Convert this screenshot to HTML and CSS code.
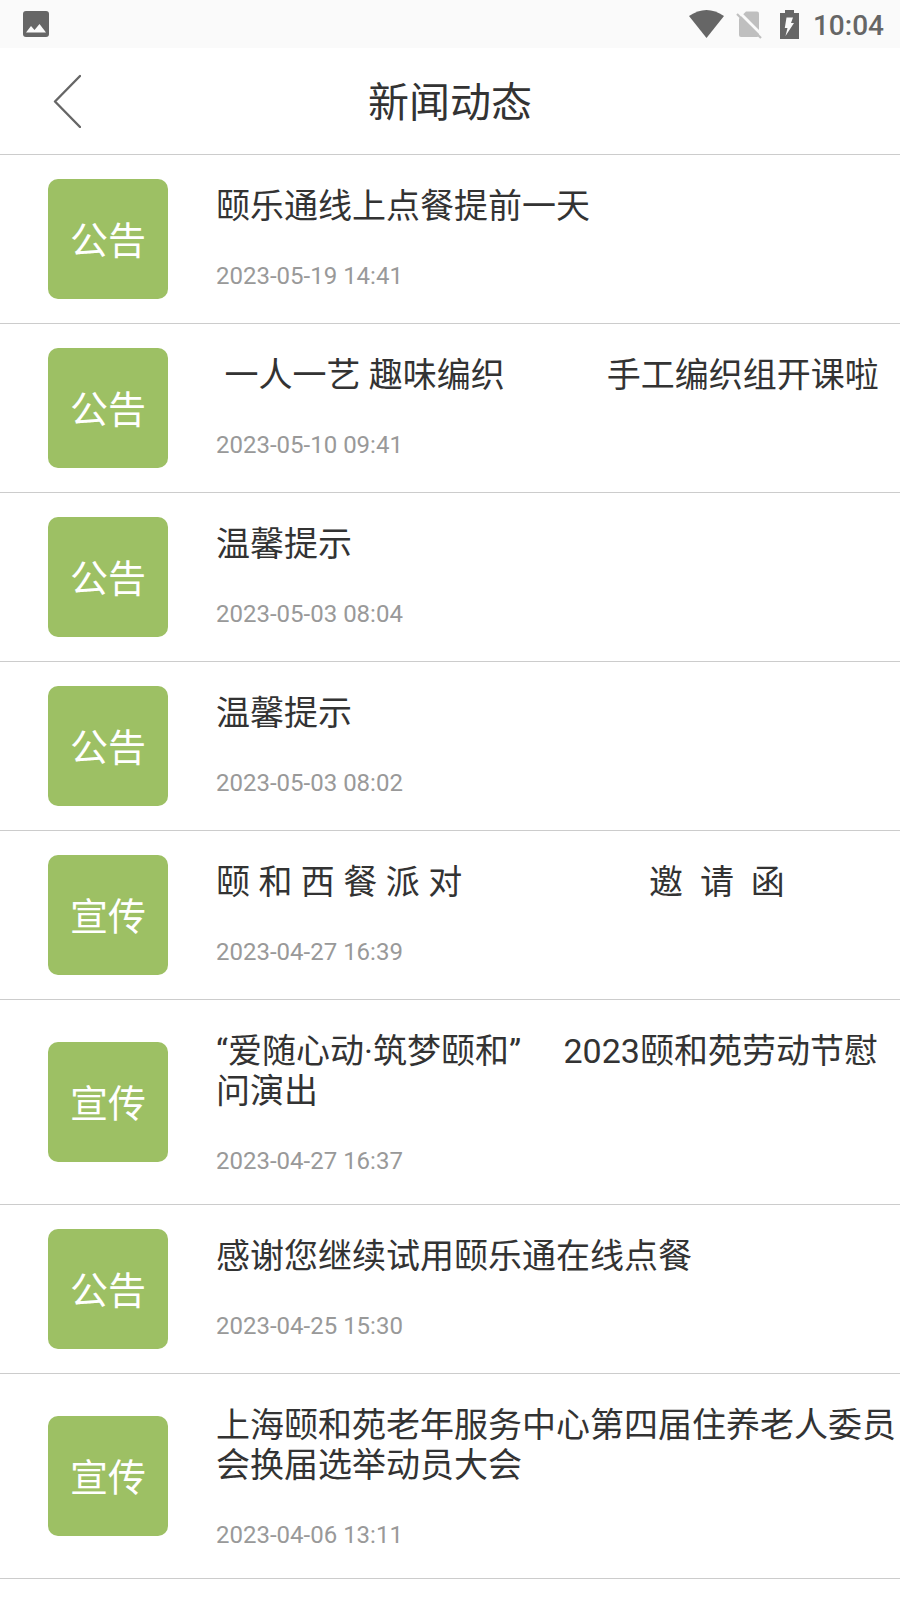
FILE: index.html
```
<!DOCTYPE html>
<html lang="zh-CN">
<head>
    <meta charset="UTF-8">
    <meta name="viewport" content="width=device-width, initial-scale=1.0">
    <title>新闻动态</title>
    <link rel="stylesheet" href="styles.css">
</head>
<body>
    <div class="status-bar">
        <svg class="status-picture" width="26" height="26" viewBox="0 0 26 26" aria-hidden="true">
            <rect width="26" height="26" rx="3" fill="#666"/>
            <path d="M3 21.500L8 15l3.500 4L16.500 13l6.500 8.500z" fill="#fafafa"/>
        </svg>
        <div class="status-right">
            <svg width="35" height="28" viewBox="0 0 35 28" aria-hidden="true">
                <path d="M0 6Q17.500-6 35 6L17.500 28z" fill="#666"/>
            </svg>
            <svg class="status-sim" width="26" height="29" viewBox="0 0 26 29" aria-hidden="true">
                <path d="M10 1.500H21q2 0 2 2V25q0 2-2 2H5q-2 0-2-2V8.500z" fill="#bfbfbf"/>
                <path d="M3.500 2.500l24 24" stroke="#fafafa" stroke-width="3"/>
                <path d="M1 4l24 24" stroke="#bfbfbf" stroke-width="2.200"/>
            </svg>
            <svg class="status-battery" width="19" height="29" viewBox="0 0 19 29" aria-hidden="true">
                <path d="M5 0h9v3h5v26H0V3h5z" fill="#666"/>
                <path d="M6.500 7.500H13L11 13h3L5.500 26l2-8H4.800z" fill="#fafafa"/>
            </svg>
            <span class="status-time">10:04</span>
        </div>
    </div>

    <header class="header">
        <button type="button" class="back" aria-label="返回">
            <svg width="28" height="54" viewBox="0 0 28 54" aria-hidden="true">
                <path d="M27 2L2 27.500L27 53" fill="none" stroke="#666" stroke-width="2.400" stroke-linecap="round" stroke-linejoin="round"/>
            </svg>
        </button>
        <h1>新闻动态</h1>
    </header>

    <main class="news-list">
        <article class="news-item">
            <span class="tag">公告</span>
            <div class="news-text">
                <h2>颐乐通线上点餐提前一天</h2>
                <time>2023-05-19 14:41</time>
            </div>
        </article>
        <article class="news-item">
            <span class="tag">公告</span>
            <div class="news-text">
                <h2> 一人一艺 趣味编织　　　手工编织组开课啦</h2>
                <time>2023-05-10 09:41</time>
            </div>
        </article>
        <article class="news-item">
            <span class="tag">公告</span>
            <div class="news-text">
                <h2>温馨提示</h2>
                <time>2023-05-03 08:04</time>
            </div>
        </article>
        <article class="news-item">
            <span class="tag">公告</span>
            <div class="news-text">
                <h2>温馨提示</h2>
                <time>2023-05-03 08:02</time>
            </div>
        </article>
        <article class="news-item">
            <span class="tag">宣传</span>
            <div class="news-text">
                <h2>颐 和 西 餐 派 对　　　　　  邀  请  函</h2>
                <time>2023-04-27 16:39</time>
            </div>
        </article>
        <article class="news-item">
            <span class="tag">宣传</span>
            <div class="news-text">
                <h2>“爱随心动·筑梦颐和”　 2023颐和苑劳动节慰问演出</h2>
                <time>2023-04-27 16:37</time>
            </div>
        </article>
        <article class="news-item">
            <span class="tag">公告</span>
            <div class="news-text">
                <h2>感谢您继续试用颐乐通在线点餐</h2>
                <time>2023-04-25 15:30</time>
            </div>
        </article>
        <article class="news-item">
            <span class="tag">宣传</span>
            <div class="news-text">
                <h2>上海颐和苑老年服务中心第四届住养老人委员会换届选举动员大会</h2>
                <time>2023-04-06 13:11</time>
            </div>
        </article>
    </main>
</body>
</html>
```
FILE: styles.css
```
* {
    box-sizing: border-box;
}
body {
    margin: 0;
    font-family: Roboto, "Noto Sans CJK SC", sans-serif;
    color: #333333;
    background: #ffffff;
}
svg {
    display: block;
}
.status-bar {
    display: flex;
    align-items: center;
    justify-content: space-between;
    height: 48px;
    padding: 0 16px 0 23px;
    background: #fafafa;
}
.status-right {
    display: flex;
    align-items: center;
}
.status-sim {
    margin-left: 12px;
}
.status-battery {
    margin-left: 18px;
}
.status-time {
    margin-left: 14px;
    padding-top: 4px;
    font-size: 28px;
    font-weight: 500;
    line-height: 44px;
    color: #666666;
}
.header {
    display: grid;
    grid-template-columns: 120px 1fr 120px;
    align-items: center;
    height: 107px;
    border-bottom: 1px solid #cccccc;
}
.back {
    justify-self: start;
    margin-left: 48px;
    padding: 5px;
    border: none;
    background: none;
    cursor: pointer;
}
.header h1 {
    margin: 0;
    padding-top: 4px;
    font-size: 41px;
    font-weight: 400;
    line-height: 60px;
    text-align: center;
}
.news-item {
    display: flex;
    align-items: center;
    min-height: 169px;
    padding-left: 48px;
    border-bottom: 1px solid #cccccc;
}
.tag {
    display: flex;
    flex: none;
    align-items: center;
    justify-content: center;
    width: 120px;
    height: 120px;
    margin-right: 48px;
    padding-bottom: 4px;
    border-radius: 10px;
    font-size: 38px;
    color: #ffffff;
    background: #9dc064;
}
.news-text {
    flex: 1;
    align-self: flex-start;
    min-width: 0;
    padding: 31px 0 29px;
}
.news-text h2 {
    margin: 0 0 36px;
    font-size: 34px;
    font-weight: 400;
    line-height: 40px;
    white-space: pre-wrap;
}
.news-text time {
    display: block;
    font-size: 24px;
    line-height: 28px;
    color: #999999;
}
```
